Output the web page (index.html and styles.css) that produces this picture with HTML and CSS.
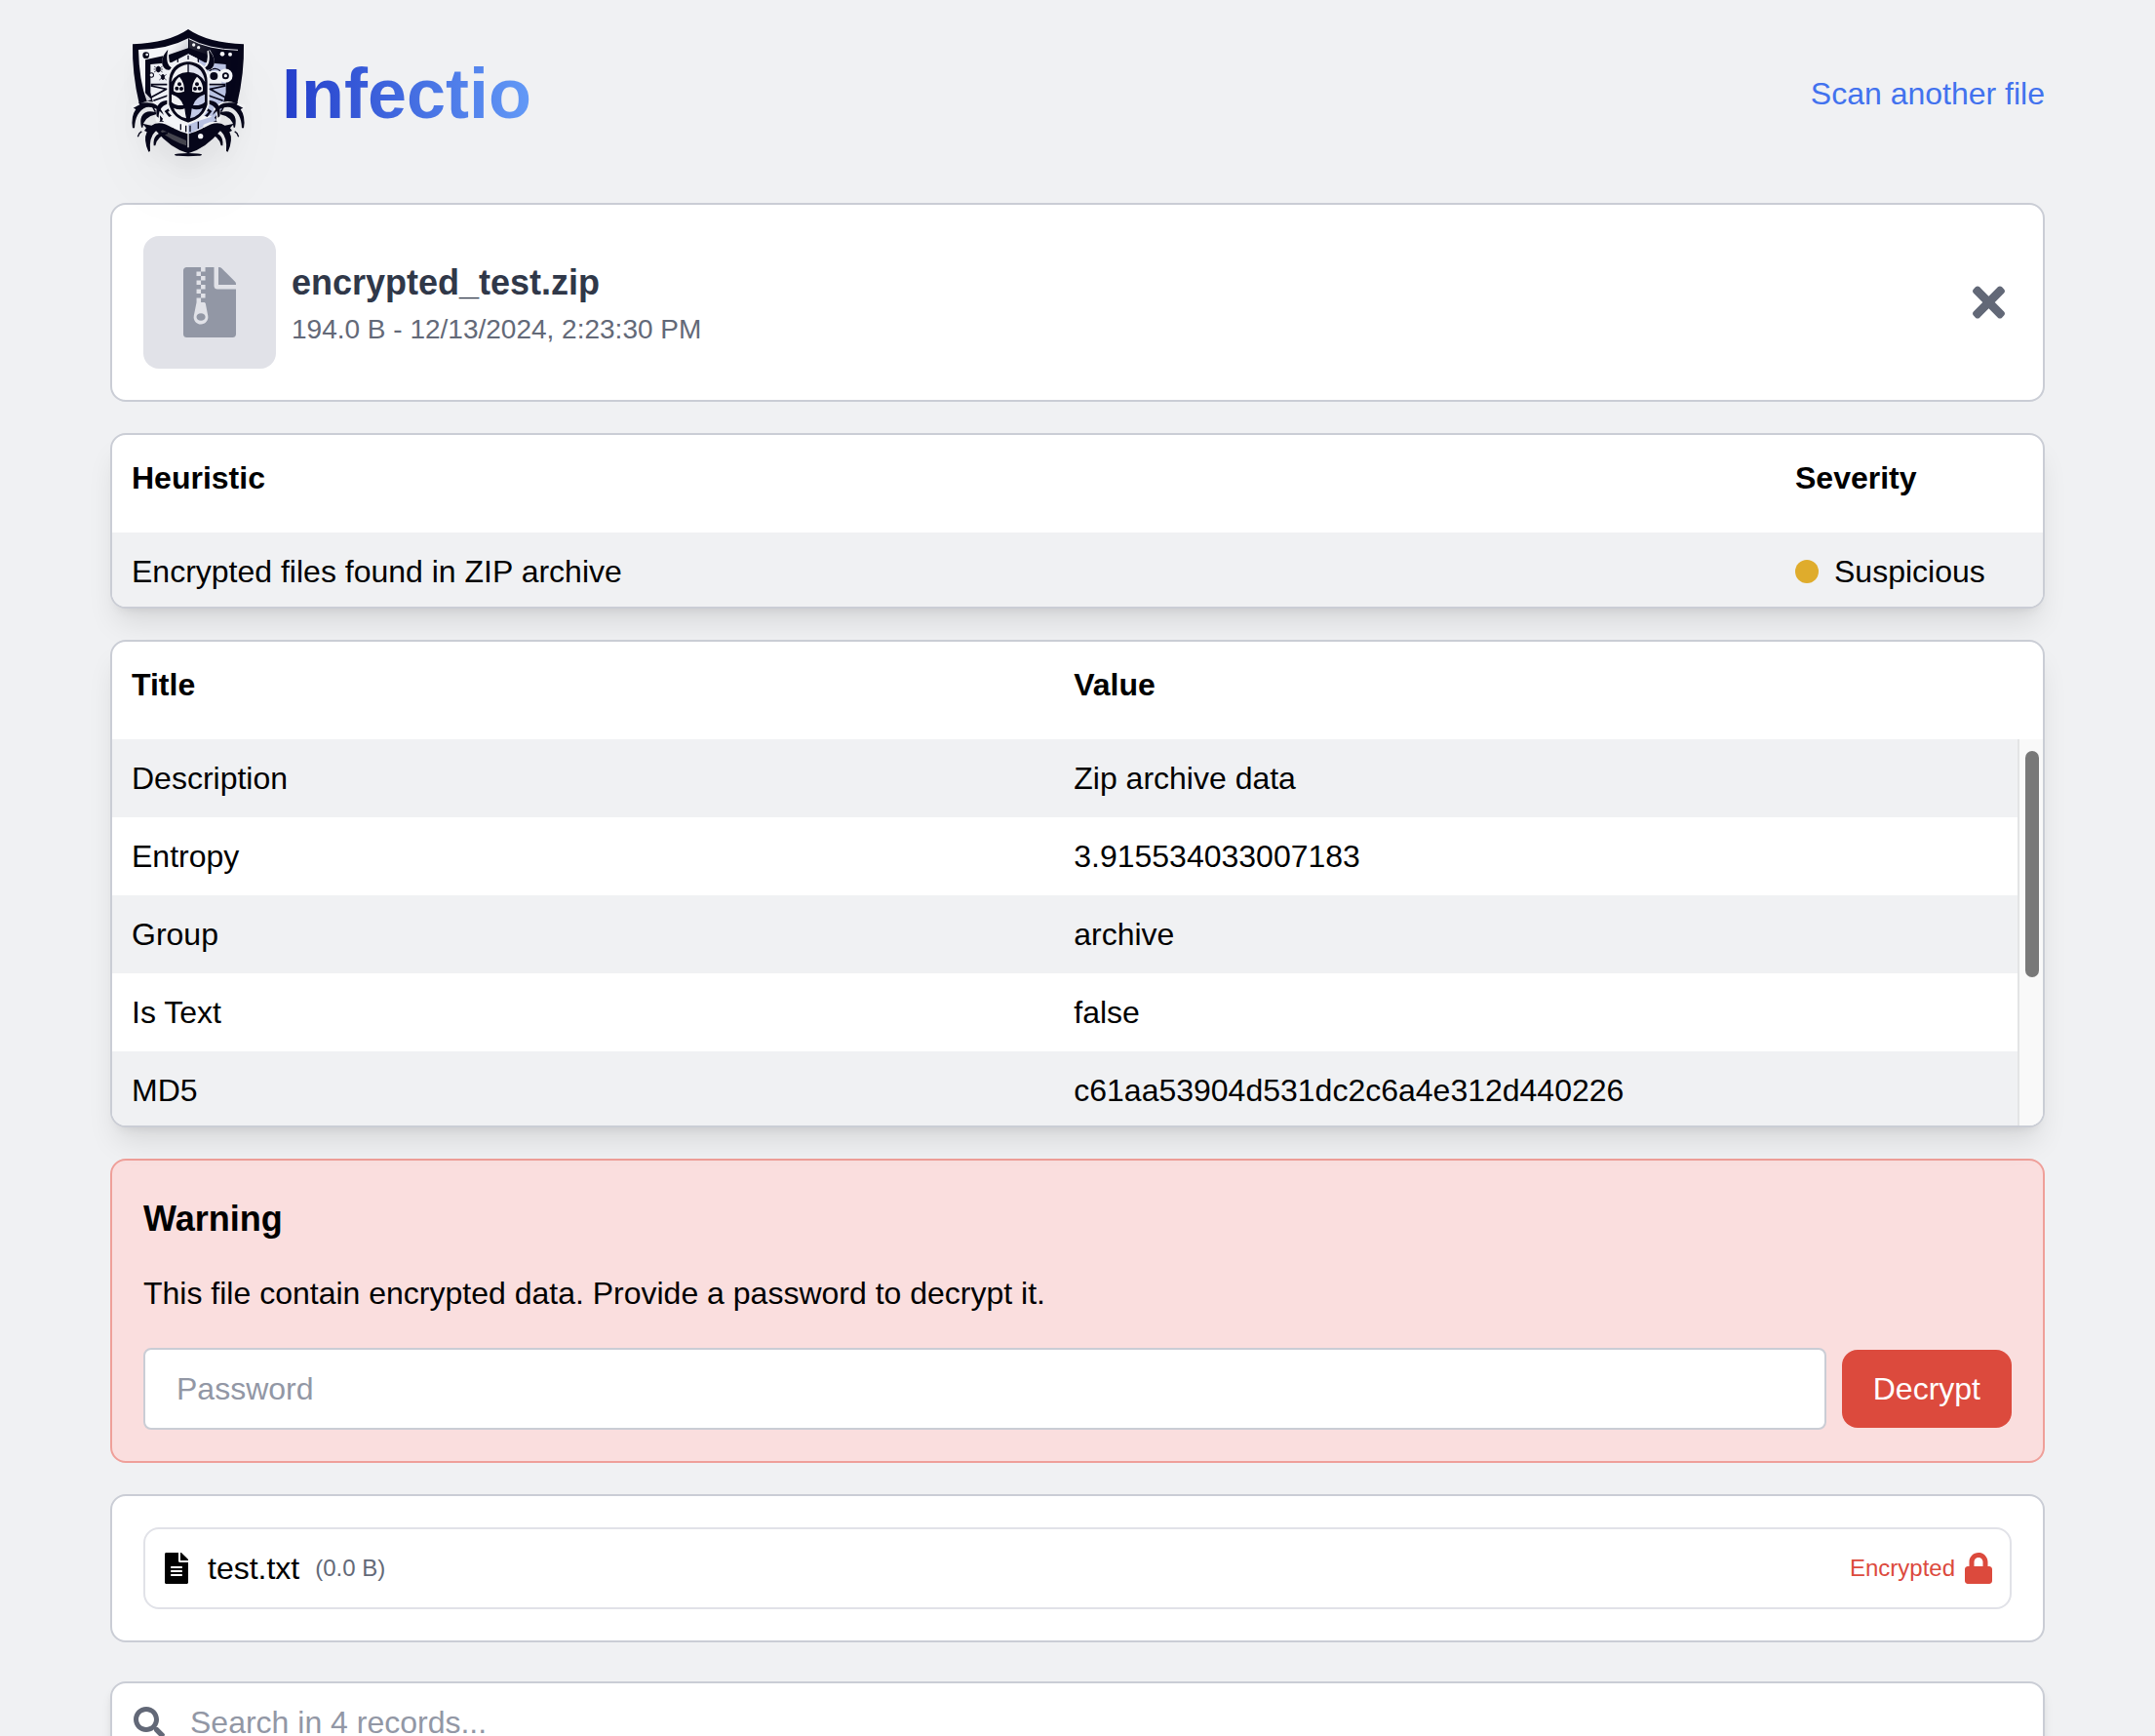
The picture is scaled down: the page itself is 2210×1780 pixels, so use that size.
FILE: index.html
```html
<!DOCTYPE html>
<html lang="en">
<head>
  <meta charset="utf-8">
  <meta name="viewport" content="width=device-width, initial-scale=1">
  <title>Infectio</title>
  <link rel="stylesheet" href="styles.css">
</head>
<body>
  <div class="container">
    <header class="header">
      <a class="brand" href="#">
        <svg class="brand-logo" viewBox="-21 -12 480 480" aria-hidden="true">
          <defs>
            <linearGradient id="steel" x1="0" y1="0" x2="1" y2="1">
              <stop offset="0.4" stop-color="#f4f5f8"/>
              <stop offset="1" stop-color="#77778a"/>
            </linearGradient>
            <linearGradient id="night" x1="0" y1="0" x2="1" y2="1">
              <stop offset="0" stop-color="#33333f"/>
              <stop offset="0.4" stop-color="#05051a"/>
            </linearGradient>
            <g id="legs">
              <g fill="none" stroke="#f0f1f3" stroke-width="14" stroke-linecap="round">
                <path d="M134 276 Q108 250 76 264 L50 268"/>
                <path d="M166 328 Q128 312 106 336"/>
                <path d="M130 270 Q122 290 126 308"/>
              </g>
              <path fill="#06061a" d="M144 294 Q128 252 88 256 L66 256 L70 262 L50 272 L58 276 Q42 298 48 334 L54 334 Q56 284 90 270 Q120 266 144 294Z"/>
              <path fill="#06061a" d="M120 286 Q88 276 76 298 Q70 312 75 332 L79 332 Q82 300 120 292Z"/>
              <path fill="#06061a" d="M172 334 Q132 308 106 326 L78 320 L90 334 L84 342 L92 346 Q80 370 97 407 L102 405 Q98 362 118 344 Q138 330 172 342Z"/>
              <path fill="#06061a" d="M156 346 Q108 346 113 388 L118 388 Q124 358 156 352Z"/>
              <path fill="#06061a" d="M162 248 Q114 248 122 298 L128 302 Q128 264 162 258Z"/>
              <path fill="#06061a" d="M164 270 L146 282 L160 300 L168 296 L156 284 L168 278Z"/>
              <path d="M64 361 L69 350 L76 344" fill="none" stroke="#06061a" stroke-width="4"/>
              <path fill="#f0f1f3" stroke="#f0f1f3" stroke-width="9" d="M156 96 Q134 128 148 148 L172 154 Q150 136 156 96Z"/>
              <path fill="#06061a" d="M157 92 Q128 124 144 148 Q156 162 172 150 Q146 140 157 92Z"/>
            </g>
          </defs>
          <path fill="#06061a" d="M219 30 Q158 72 48 76 Q46 166 68 258 L104 262 L134 320 L120 342 Q164 396 219 412 Q274 396 318 342 L304 320 L334 262 L370 258 Q392 166 390 76 Q280 72 219 30Z"/>
          <path fill="url(#steel)" d="M219 58 Q156 92 66 93 Q68 190 92 252 L106 246 L87 226 V124 L160 108 L219 88Z"/>
          <path fill="url(#night)" d="M222 56 Q280 88 374 92 Q372 190 350 250 L338 246 L351 226 V124 L278 108 L222 88Z"/>
          <path d="M221 59 Q280 92 372 94" fill="none" stroke="#e9eaf0" stroke-width="3"/>
          <path fill="#eef0f5" d="M219 106 L168 132 L103 138 V224 L116 276 L150 316 L219 352Z"/>
          <path fill="#b9c2e2" d="M219 106 L270 132 L335 138 V224 L322 276 L288 316 L219 352Z"/>
          <path fill="#eef0f5" d="M219 106 L248 120 V150 H219Z M280 158 H322 V204 H280Z"/>
          <path fill="#f4f5f8" d="M150 296 L288 296 L300 310 Q262 342 219 352 Q176 342 138 310Z"/>
          <path fill="#b9c2e2" d="M219 322 L296 298 L306 310 L240 343 L219 352Z"/>
          <path fill="#44444e" d="M140 340 L213 372 V388 Q166 372 134 344Z"/>
          <path d="M219 350V394" stroke="#f0f1f3" stroke-width="4"/>
          <path d="M187 114V132M250 114V132M196 322V340M212 326V346M225 326V346M250 314V336M219 110V126" stroke="#06061a" stroke-width="4"/>
          <path d="M104 200H162M104 204L152 214L104 240M112 250L162 232M276 200H334M334 204L286 214L334 240M326 250L276 232" fill="none" stroke="#06061a" stroke-width="5"/>
          <!-- rivets, gears and small bugs on the plates -->
          <circle cx="89" cy="110" r="10" fill="#06061a"/><circle cx="92" cy="108" r="4" fill="#f4f5f8"/>
          <g fill="#f4f5f8">
            <circle cx="236" cy="78" r="5"/><circle cx="251" cy="86" r="5"/>
            <circle cx="324" cy="106" r="7"/><circle cx="348" cy="107" r="6"/>
            <circle cx="257" cy="359" r="8"/>
          </g>
          <circle cx="106" cy="171" r="8" fill="#06061a"/><circle cx="106" cy="171" r="5" fill="#f4f5f8"/>
          <g fill="#06061a" stroke="#06061a" stroke-width="2">
            <ellipse cx="127" cy="153" rx="6" ry="9"/><path d="M114 144L140 162M114 162L140 144M113 153H141"/>
            <ellipse cx="141" cy="177" rx="5" ry="8"/><path d="M130 169L152 186M130 186L152 169"/>
          </g>
          <circle cx="298" cy="174" r="12" fill="#06061a"/>
          <path d="M284 158 Q302 144 318 158" fill="none" stroke="#06061a" stroke-width="4"/>
          <circle cx="334" cy="173" r="16" fill="#06061a" stroke="#f4f5f8" stroke-width="11"/>
          <circle cx="334" cy="173" r="5" fill="#f4f5f8"/>
          <use href="#legs"/>
          <use href="#legs" transform="translate(438 0) scale(-1 1)"/>
          <!-- beetle head -->
          <path fill="#06061a" stroke="#f0f1f3" stroke-width="6" d="M219 126 Q280 132 281 192 V262 Q270 306 219 320 Q168 306 157 262 V192 Q158 132 219 126Z"/>
          <path fill="#f0f1f3" d="M217 138 Q174 144 167 192 Q184 164 217 162Z"/>
          <path fill="#dfe2ee" d="M221 138 Q264 144 271 192 Q254 164 221 162Z"/>
          <path fill="#f0f1f3" d="M174 208 Q178 186 192 176 Q208 194 207 221 Q184 230 174 220Z M264 208 Q260 186 246 176 Q230 194 231 221 Q254 230 264 220Z"/>
          <g fill="#06061a">
            <circle cx="192" cy="199" r="6"/><circle cx="184" cy="212" r="6"/><circle cx="198" cy="213" r="6"/>
            <circle cx="246" cy="199" r="6"/><circle cx="254" cy="212" r="6"/><circle cx="240" cy="213" r="6"/>
          </g>
          <path fill="#f0f1f3" d="M168 230 Q198 240 204 264 Q180 266 168 254Z M174 272 Q192 280 208 274 Q210 292 213 304 Q182 296 174 272Z"/>
          <path fill="#c3cae6" d="M270 230 Q240 240 234 264 Q258 266 270 254Z M264 272 Q246 280 230 274 Q228 292 225 304 Q256 296 264 272Z"/>
          <ellipse cx="219" cy="416" rx="42" ry="5" fill="#06061a"/>
        </svg>
        <span class="brand-name">Infectio</span>
      </a>
      <a class="scan-link" href="#">Scan another file</a>
    </header>

    <main class="report">
      <section class="card file-card">
        <div class="file-thumb">
          <svg class="file-thumb-icon" viewBox="0 0 384 512" fill="currentColor" aria-hidden="true"><path d="M377 105L279.1 7c-4.500-4.500-10.600-7-17-7H256v128h128v-6.100c0-6.300-2.500-12.400-7-16.900zM128.400 336c-17.900 0-32.400 12.100-32.400 27 0 15 14.600 27 32.500 27s32.400-12.100 32.400-27-14.600-27-32.500-27zM224 136V0h-63.600v32h-32V0H24C10.700 0 0 10.700 0 24v464c0 13.300 10.700 24 24 24h336c13.300 0 24-10.700 24-24V160H248c-13.200 0-24-10.800-24-24zM95.900 32h32v32h-32zm32.300 384c-33.200 0-58-30.400-51.400-62.900L96.400 256v-32h32v-32h-32v-32h32v-32h-32V96h32V64h32v32h-32v32h32v32h-32v32h32v32h-32v32h22.100c5.700 0 10.700 4.100 11.800 9.700l17.300 87.700c6.400 32.400-18.400 62.600-51.400 62.600z"/></svg>
        </div>
        <div class="file-info">
          <h1 class="file-name">encrypted_test.zip</h1>
          <p class="file-meta">194.0 B - 12/13/2024, 2:23:30 PM</p>
        </div>
        <button class="close-button" type="button" aria-label="Close">
          <svg class="close-icon" viewBox="0 0 352 512" fill="currentColor" aria-hidden="true"><path d="M242.720 256l100.070-100.070c12.280-12.280 12.280-32.190 0-44.480l-22.240-22.240c-12.280-12.280-32.190-12.280-44.480 0L176 189.280 75.930 89.210c-12.280-12.280-32.190-12.280-44.480 0L9.210 111.450c-12.280 12.280-12.280 32.190 0 44.480L109.280 256 9.210 356.070c-12.280 12.280-12.280 32.190 0 44.480l22.240 22.240c12.280 12.280 32.200 12.280 44.480 0L176 322.720l100.070 100.070c12.280 12.280 32.200 12.280 44.480 0l22.240-22.240c12.280-12.280 12.280-32.190 0-44.480L242.720 256z"/></svg>
        </button>
      </section>

      <section class="card table-card">
        <table class="data-table">
          <colgroup><col><col class="col-severity"></colgroup>
          <thead><tr><th scope="col">Heuristic</th><th scope="col">Severity</th></tr></thead>
          <tbody>
            <tr><td>Encrypted files found in ZIP archive</td><td><span class="severity"><span class="severity-dot"></span>Suspicious</span></td></tr>
          </tbody>
        </table>
      </section>

      <section class="card table-card">
        <table class="data-table">
          <colgroup><col class="col-title"><col></colgroup>
          <thead><tr><th scope="col">Title</th><th scope="col">Value</th></tr></thead>
          <tbody>
            <tr><td>Description</td><td>Zip archive data</td></tr>
            <tr><td>Entropy</td><td>3.915534033007183</td></tr>
            <tr><td>Group</td><td>archive</td></tr>
            <tr><td>Is Text</td><td>false</td></tr>
            <tr><td>MD5</td><td>c61aa53904d531dc2c6a4e312d440226</td></tr>
          </tbody>
        </table>
        <div class="scroll-track"><div class="scroll-thumb"></div></div>
      </section>

      <section class="card warning">
        <h2 class="warning-title">Warning</h2>
        <p class="warning-text">This file contain encrypted data. Provide a password to decrypt it.</p>
        <form class="decrypt-form">
          <input class="password-input" type="password" placeholder="Password" aria-label="Password">
          <button class="decrypt-button" type="button">Decrypt</button>
        </form>
      </section>

      <section class="card contents">
        <div class="entry">
          <svg class="entry-icon" viewBox="0 0 384 512" fill="currentColor" aria-hidden="true"><path d="M224 136V0H24C10.700 0 0 10.700 0 24v464c0 13.300 10.700 24 24 24h336c13.300 0 24-10.700 24-24V160H248c-13.200 0-24-10.800-24-24zm64 236c0 6.600-5.400 12-12 12H108c-6.600 0-12-5.400-12-12v-8c0-6.600 5.400-12 12-12h168c6.600 0 12 5.400 12 12v8zm0-64c0 6.600-5.400 12-12 12H108c-6.600 0-12-5.400-12-12v-8c0-6.600 5.400-12 12-12h168c6.600 0 12 5.400 12 12v8zm0-72v8c0 6.600-5.400 12-12 12H108c-6.600 0-12-5.400-12-12v-8c0-6.600 5.400-12 12-12h168c6.600 0 12 5.400 12 12zm96-114.100v6.100H256V0h6.100c6.400 0 12.500 2.500 17 7l97.900 98c4.500 4.500 7 10.600 7 16.900z"/></svg>
          <span class="entry-name">test.txt</span>
          <span class="entry-size">(0.0 B)</span>
          <span class="entry-status">Encrypted
            <svg class="entry-icon" viewBox="0 0 448 512" fill="currentColor" aria-hidden="true"><path d="M400 224h-24v-72C376 68.200 307.800 0 224 0S72 68.200 72 152v72H48c-26.500 0-48 21.500-48 48v192c0 26.500 21.500 48 48 48h352c26.500 0 48-21.500 48-48V272c0-26.500-21.500-48-48-48zm-104 0H152v-72c0-39.700 32.300-72 72-72s72 32.300 72 72v72z"/></svg>
          </span>
        </div>
      </section>

      <label class="card search">
        <svg class="entry-icon search-icon" viewBox="0 0 512 512" fill="currentColor" aria-hidden="true"><path d="M505 442.700L405.300 343c-4.500-4.500-10.600-7-17-7H372c27.600-35.300 44-79.700 44-128C416 93.100 322.900 0 208 0S0 93.100 0 208s93.100 208 208 208c48.300 0 92.700-16.400 128-44v16.300c0 6.400 2.500 12.500 7 17l99.700 99.700c9.400 9.400 24.600 9.400 33.900 0l28.300-28.300c9.400-9.400 9.400-24.600.1-34zM208 336c-70.700 0-128-57.200-128-128 0-70.700 57.200-128 128-128 70.700 0 128 57.200 128 128 0 70.700-57.200 128-128 128z"/></svg>
        <input class="search-input" type="search" placeholder="Search in 4 records..." aria-label="Search records">
      </label>
    </main>
  </div>
</body>
</html>
```
FILE: styles.css
```css
*,
*::before,
*::after {
  box-sizing: border-box;
}

body {
  margin: 0;
  background: #f0f1f3;
  color: #000;
  font: 32px/48px "Liberation Sans", Arial, Helvetica, sans-serif;
}

h1,
h2,
p {
  margin: 0;
}

a {
  text-decoration: none;
}

button,
input {
  font: inherit;
}

.container {
  max-width: 2048px;
  margin: 0 auto;
  padding: 16px 32px 32px;
}

.header {
  display: flex;
  align-items: center;
  justify-content: space-between;
  margin-bottom: 32px;
}

.brand {
  display: flex;
  align-items: center;
  gap: 16px;
}

.brand-logo {
  display: block;
  width: 160px;
  height: 160px;
  filter: drop-shadow(0 40px 26px rgba(0, 0, 0, 0.03)) drop-shadow(0 16px 10px rgba(0, 0, 0, 0.04));
}

.brand-name {
  font-size: 72px;
  font-weight: 700;
  line-height: 80px;
  color: transparent;
  background: linear-gradient(to right, #233dca, #639af7);
  background-clip: text;
  -webkit-background-clip: text;
}

.scan-link {
  color: #4272ee;
}

.report {
  display: flex;
  flex-direction: column;
  gap: 32px;
}

.card {
  background: #fff;
  border: 2px solid #cacdd5;
  border-radius: 16px;
}

/* File summary */

.file-card {
  display: flex;
  align-items: center;
  gap: 16px;
  padding: 32px;
}

.file-thumb {
  display: grid;
  place-items: center;
  width: 136px;
  height: 136px;
  border-radius: 16px;
  background: #e1e2e8;
  color: #9297a5;
}

.file-thumb-icon {
  height: 72px;
}

.file-info {
  flex: 1;
}

.file-name {
  font-size: 36px;
  line-height: 56px;
  color: #303849;
}

.file-meta {
  font-size: 28px;
  line-height: 40px;
  color: #636978;
}

.close-button {
  display: grid;
  place-items: center;
  width: 48px;
  height: 48px;
  padding: 0;
  border: 0;
  background: none;
  color: #626877;
}

.close-icon {
  height: 48px;
}

/* Tables */

.table-card {
  position: relative;
  overflow: hidden;
  max-height: 500px;
  box-shadow: 0 20px 30px -6px rgba(0, 0, 0, 0.1), 0 8px 12px -8px rgba(0, 0, 0, 0.1);
}

.data-table {
  width: 100%;
  border-collapse: collapse;
  table-layout: fixed;
}

.col-severity {
  width: 274px;
}

.col-title {
  width: 48.8%;
}

.data-table th {
  padding: 20px 20px 32px;
  text-align: left;
}

.data-table td {
  padding: 16px 20px;
}

.data-table tr:last-child td {
  padding-bottom: 12px;
}

.data-table tbody tr:nth-child(odd) {
  background: #f0f1f3;
}

.severity {
  display: flex;
  align-items: center;
  gap: 16px;
}

.severity-dot {
  width: 24px;
  height: 24px;
  border-radius: 50%;
  background: #dfac2c;
}

.scroll-track {
  position: absolute;
  top: 100px;
  right: 0;
  bottom: 0;
  width: 26px;
  padding: 12px 4px 0 6px;
  border-left: 2px solid #e3e4e5;
  background: #f9f9f9;
}

.scroll-thumb {
  width: 14px;
  height: 232px;
  border-radius: 8px;
  background: #787878;
}

/* Password prompt */

.warning {
  padding: 32px;
  border-color: #ef9f99;
  background: #fadede;
}

.warning-title {
  margin-bottom: 24px;
  font-size: 36px;
  line-height: 56px;
}

.warning-text {
  margin-bottom: 32px;
}

.decrypt-form {
  display: flex;
  align-items: center;
  gap: 16px;
}

.password-input {
  flex: 1;
  min-width: 0;
  padding: 16px 32px;
  border: 2px solid #cacdd5;
  border-radius: 8px;
  background: #fff;
  line-height: 48px;
}

input::placeholder {
  color: #9297a5;
  opacity: 1;
}

.decrypt-button {
  padding: 16px 32px;
  border: 0;
  border-radius: 16px;
  background: #dc4a3d;
  color: #fff;
}

/* Archive contents */

.contents {
  padding: 32px;
}

.entry {
  display: flex;
  align-items: center;
  gap: 16px;
  padding: 16px;
  border: 2px solid #e1e2e8;
  border-radius: 16px;
}

.entry-icon {
  flex: none;
  width: 32px;
  height: 32px;
}

.entry-size,
.entry-status {
  font-size: 24px;
}

.entry-size {
  color: #636978;
}

.entry-status {
  display: flex;
  align-items: center;
  gap: 8px;
  margin-left: auto;
  color: #dc4a3d;
}

/* Record search */

.search {
  display: flex;
  align-items: center;
  gap: 26px;
  margin-top: 8px;
  padding: 16px 22px;
  box-shadow: 0 8px 12px -2px rgba(0, 0, 0, 0.1), 0 4px 8px -4px rgba(0, 0, 0, 0.1);
}

.search-icon {
  color: #626877;
}

.search-input {
  flex: 1;
  min-width: 0;
  padding: 0;
  border: 0;
  background: none;
  line-height: 48px;
  appearance: none;
}
```
